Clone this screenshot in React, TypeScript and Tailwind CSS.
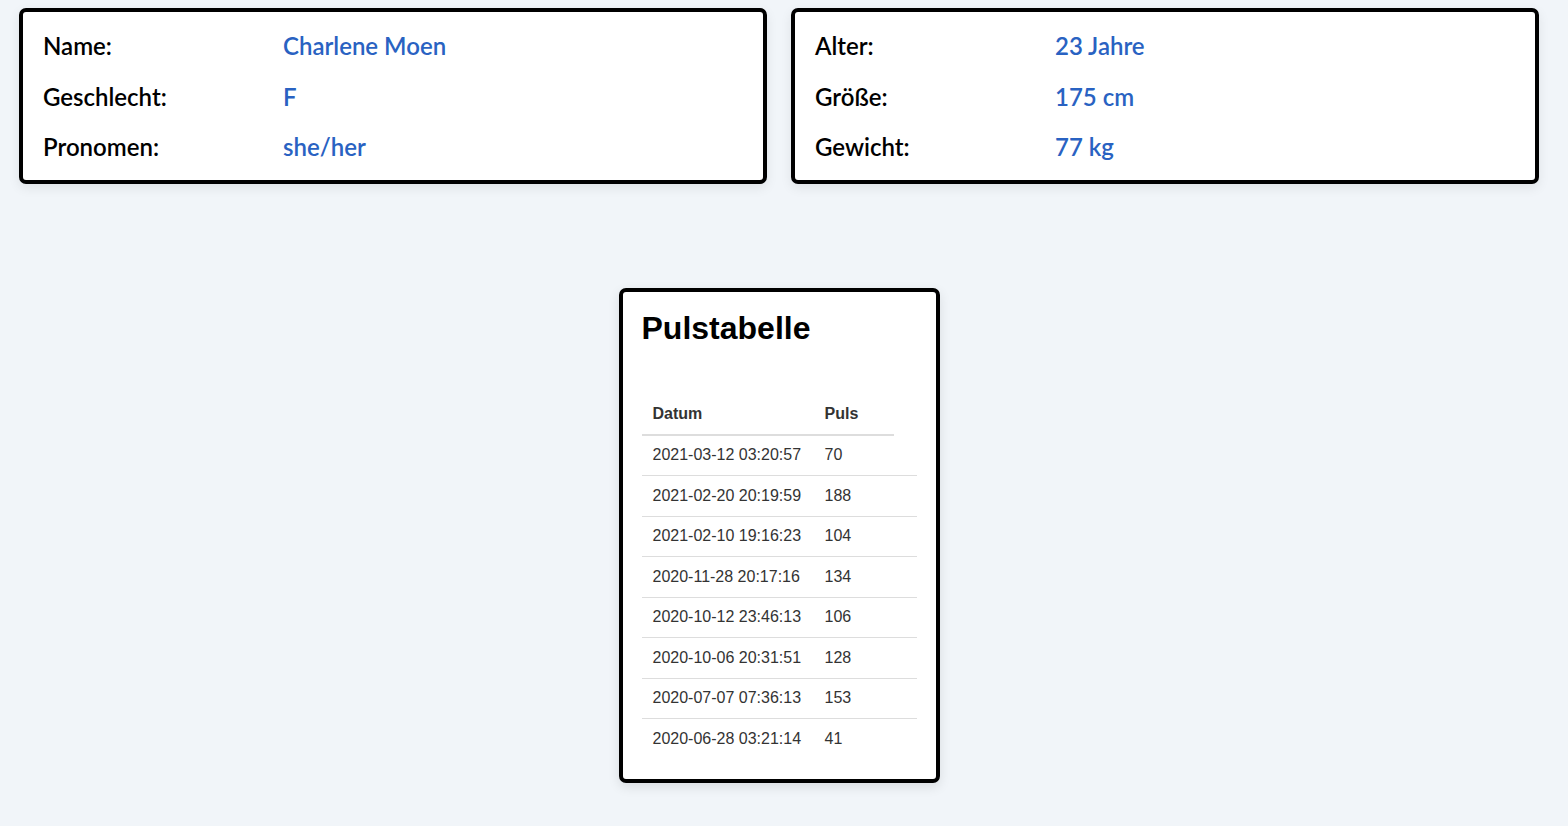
import React from "react";

const left = [
  ["Name:", "Charlene Moen"],
  ["Geschlecht:", "F"],
  ["Pronomen:", "she/her"],
];
const right = [
  ["Alter:", "23 Jahre"],
  ["Größe:", "175 cm"],
  ["Gewicht:", "77 kg"],
];
const rows = [
  ["2021-03-12 03:20:57", "70"],
  ["2021-02-20 20:19:59", "188"],
  ["2021-02-10 19:16:23", "104"],
  ["2020-11-28 20:17:16", "134"],
  ["2020-10-12 23:46:13", "106"],
  ["2020-10-06 20:31:51", "128"],
  ["2020-07-07 07:36:13", "153"],
  ["2020-06-28 03:21:14", "41"],
];

function InfoCard({ items }: { items: string[][] }) {
  return (
    <div
      className="flex-1 bg-white border-4 border-black rounded-[7px] shadow-[0_4px_12px_rgba(0,0,0,0.08)] px-5 pt-[9px] pb-[7px]"
      style={{ fontFamily: "Lato, 'Noto Sans', sans-serif" }}
    >
      {items.map(([k, v]) => (
        <div key={k} className="flex items-center h-[50.5px] text-[24px] font-semibold">
          <div className="w-[240px] text-black">{k}</div>
          <div className="text-[#2962c2]">{v}</div>
        </div>
      ))}
    </div>
  );
}

export default function App() {
  return (
    <div className="min-h-[826px] bg-slate-100 pl-[19px] pr-[29px] pt-[8px]">
      <div className="flex gap-6">
        <InfoCard items={left} />
        <InfoCard items={right} />
      </div>
      <div className="flex justify-center mt-[104px]">
        <div
          className="w-[321px] bg-white border-4 border-black rounded-[7px] shadow-[0_4px_12px_rgba(0,0,0,0.1)] px-[19px] pt-[19px] pb-[19px]"
          style={{ fontFamily: "'Liberation Sans', Arial, sans-serif" }}
        >
          <h1 className="text-[32px] font-bold leading-none text-black mt-[1px]">Pulstabelle</h1>
          <div className="mt-[50px] text-[16px] text-[#333]">
            <div className="flex items-center h-[42px] w-[252px] border-b-2 border-[#dddddd] font-bold">
              <div className="w-[172px] pl-[11px]">Datum</div>
              <div className="pl-[11px]">Puls</div>
            </div>
            {rows.map(([d, p], i) => (
              <div
                key={d}
                className={
                  "flex items-center h-[40.5px] " +
                  (i < rows.length - 1 ? "border-b border-[#dddddd]" : "")
                }
              >
                <div className="w-[172px] pl-[11px]">{d}</div>
                <div className="pl-[11px]">{p}</div>
              </div>
            ))}
          </div>
        </div>
      </div>
    </div>
  );
}
